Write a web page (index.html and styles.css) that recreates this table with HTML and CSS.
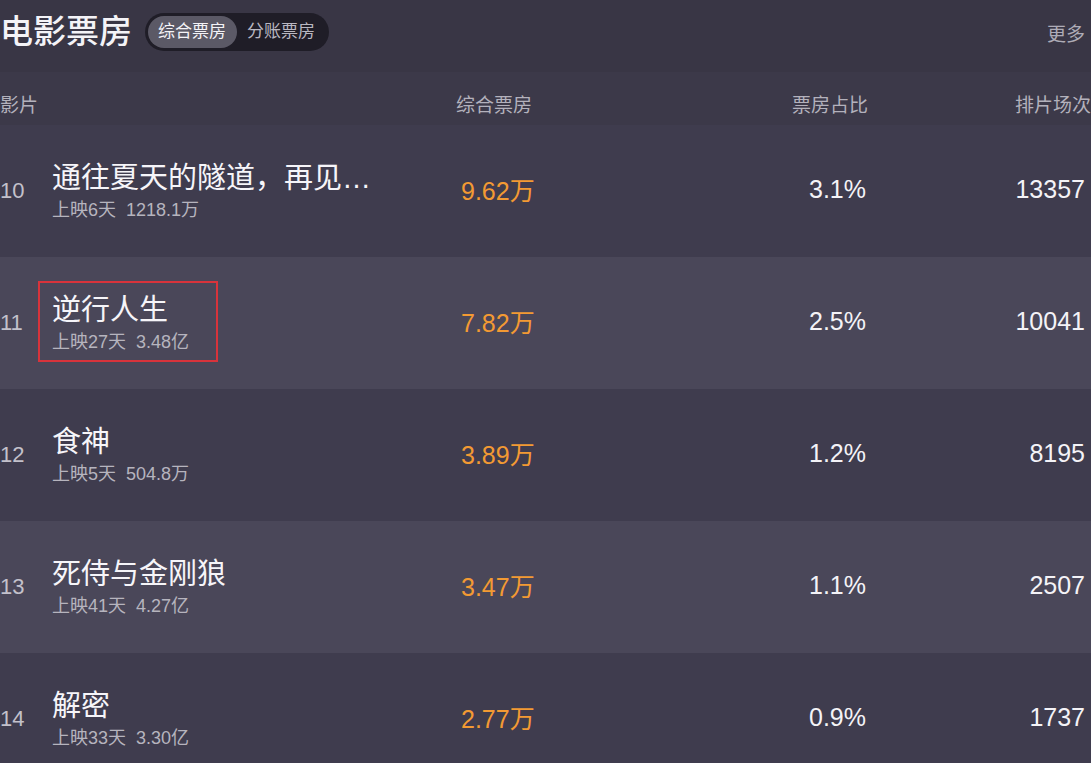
FILE: index.html
```html
<!DOCTYPE html>
<html lang="zh-CN">
  <head>
    <meta charset="UTF-8" />
    <meta name="viewport" content="width=device-width, initial-scale=1.0" />
    <title>电影票房</title>
    <link rel="stylesheet" href="styles.css">
  </head>
  <body>
    <div class="board">
      <div class="topbar">
        <h1>电影票房</h1>
        <div class="toggle">
          <span class="tab active">综合票房</span>
          <span class="tab">分账票房</span>
        </div>
        <a class="more">更多</a>
      </div>

      <div class="grid head">
        <div class="col-film">影片</div>
        <div class="col-box">综合票房</div>
        <div class="col-ratio">票房占比</div>
        <div class="col-count">排片场次</div>
      </div>

      <div class="grid row">
        <div class="rank">10</div>
        <div class="film">
          <div class="name">通往夏天的隧道，再见…</div>
          <div class="sub">上映6天&nbsp; 1218.1万</div>
        </div>
        <div class="box">9.62万</div>
        <div class="ratio">3.1%</div>
        <div class="count">13357</div>
      </div>

      <div class="grid row alt">
        <div class="rank">11</div>
        <div class="film marked">
          <div class="name">逆行人生</div>
          <div class="sub">上映27天&nbsp; 3.48亿</div>
        </div>
        <div class="box">7.82万</div>
        <div class="ratio">2.5%</div>
        <div class="count">10041</div>
      </div>

      <div class="grid row">
        <div class="rank">12</div>
        <div class="film">
          <div class="name">食神</div>
          <div class="sub">上映5天&nbsp; 504.8万</div>
        </div>
        <div class="box">3.89万</div>
        <div class="ratio">1.2%</div>
        <div class="count">8195</div>
      </div>

      <div class="grid row alt">
        <div class="rank">13</div>
        <div class="film">
          <div class="name">死侍与金刚狼</div>
          <div class="sub">上映41天&nbsp; 4.27亿</div>
        </div>
        <div class="box">3.47万</div>
        <div class="ratio">1.1%</div>
        <div class="count">2507</div>
      </div>

      <div class="grid row">
        <div class="rank">14</div>
        <div class="film">
          <div class="name">解密</div>
          <div class="sub">上映33天&nbsp; 3.30亿</div>
        </div>
        <div class="box">2.77万</div>
        <div class="ratio">0.9%</div>
        <div class="count">1737</div>
      </div>
    </div>
  </body>
</html>
```

FILE: styles.css
```css
html,
body {
  margin: 0;
  padding: 0;
  background-color: #3f3c4e;
  overflow: hidden;
}
body {
  font-family: "Liberation Sans", "Noto Sans CJK SC", Arial, sans-serif;
  color: #f2f1f5;
}
.board {
  width: 1091px;
}
.topbar {
  height: 72px;
  display: flex;
  align-items: center;
  padding-bottom: 8px;
  box-sizing: border-box;
  background-color: #393645;
}
.topbar h1 {
  margin: 0;
  font-size: 33px;
  font-weight: 500;
  line-height: 40px;
  color: #f4f3f7;
}
.toggle {
  margin-left: 13px;
  height: 38px;
  display: flex;
  align-items: center;
  padding: 0 3px;
  border-radius: 19px;
  background-color: #1f1d27;
}
.tab {
  font-size: 17px;
  line-height: 32px;
  padding: 0 11px 0 10px;
  border-radius: 16px;
  color: #b9b7c1;
}
.tab.active {
  background-color: #5b5966;
  color: #f4f3f7;
}
.more {
  margin-left: auto;
  margin-right: 6px;
  font-size: 19px;
  color: #aeacb7;
}
.grid {
  display: grid;
  grid-template-columns: 52px 404px 200px 212px 1fr;
  align-items: center;
}
.head {
  height: 53px;
  padding-top: 10px;
  box-sizing: border-box;
  background-color: #3c3949;
  font-size: 19px;
  color: #b3b1bc;
}
.head .col-film {
  grid-column: 1 / 3;
}
.head .col-ratio,
.head .col-count {
  text-align: right;
}
.row {
  height: 132px;
  background-color: #3f3c4e;
}
.row.alt {
  background-color: #4a4759;
}
.rank {
  font-size: 22px;
  color: #c3c1cb;
}
.film {
  position: relative;
  justify-self: start;
}
.name {
  font-size: 29px;
  line-height: 32px;
  color: #f6f5f9;
  white-space: nowrap;
}
.sub {
  margin-top: 6px;
  font-size: 18px;
  line-height: 20px;
  color: #b6b4be;
  white-space: nowrap;
}
.marked::after {
  content: "";
  position: absolute;
  left: -14px;
  top: -13px;
  width: 180px;
  height: 81px;
  border: 2px solid #d8333b;
  box-sizing: border-box;
}
.box {
  font-size: 25px;
  color: #f39a33;
  padding-left: 5px;
  padding-bottom: 4px;
}
.ratio,
.count {
  font-size: 25px;
  text-align: right;
  color: #f4f3f7;
  padding-bottom: 4px;
}
.ratio {
  padding-right: 2px;
}
.count {
  padding-right: 6px;
}
```
